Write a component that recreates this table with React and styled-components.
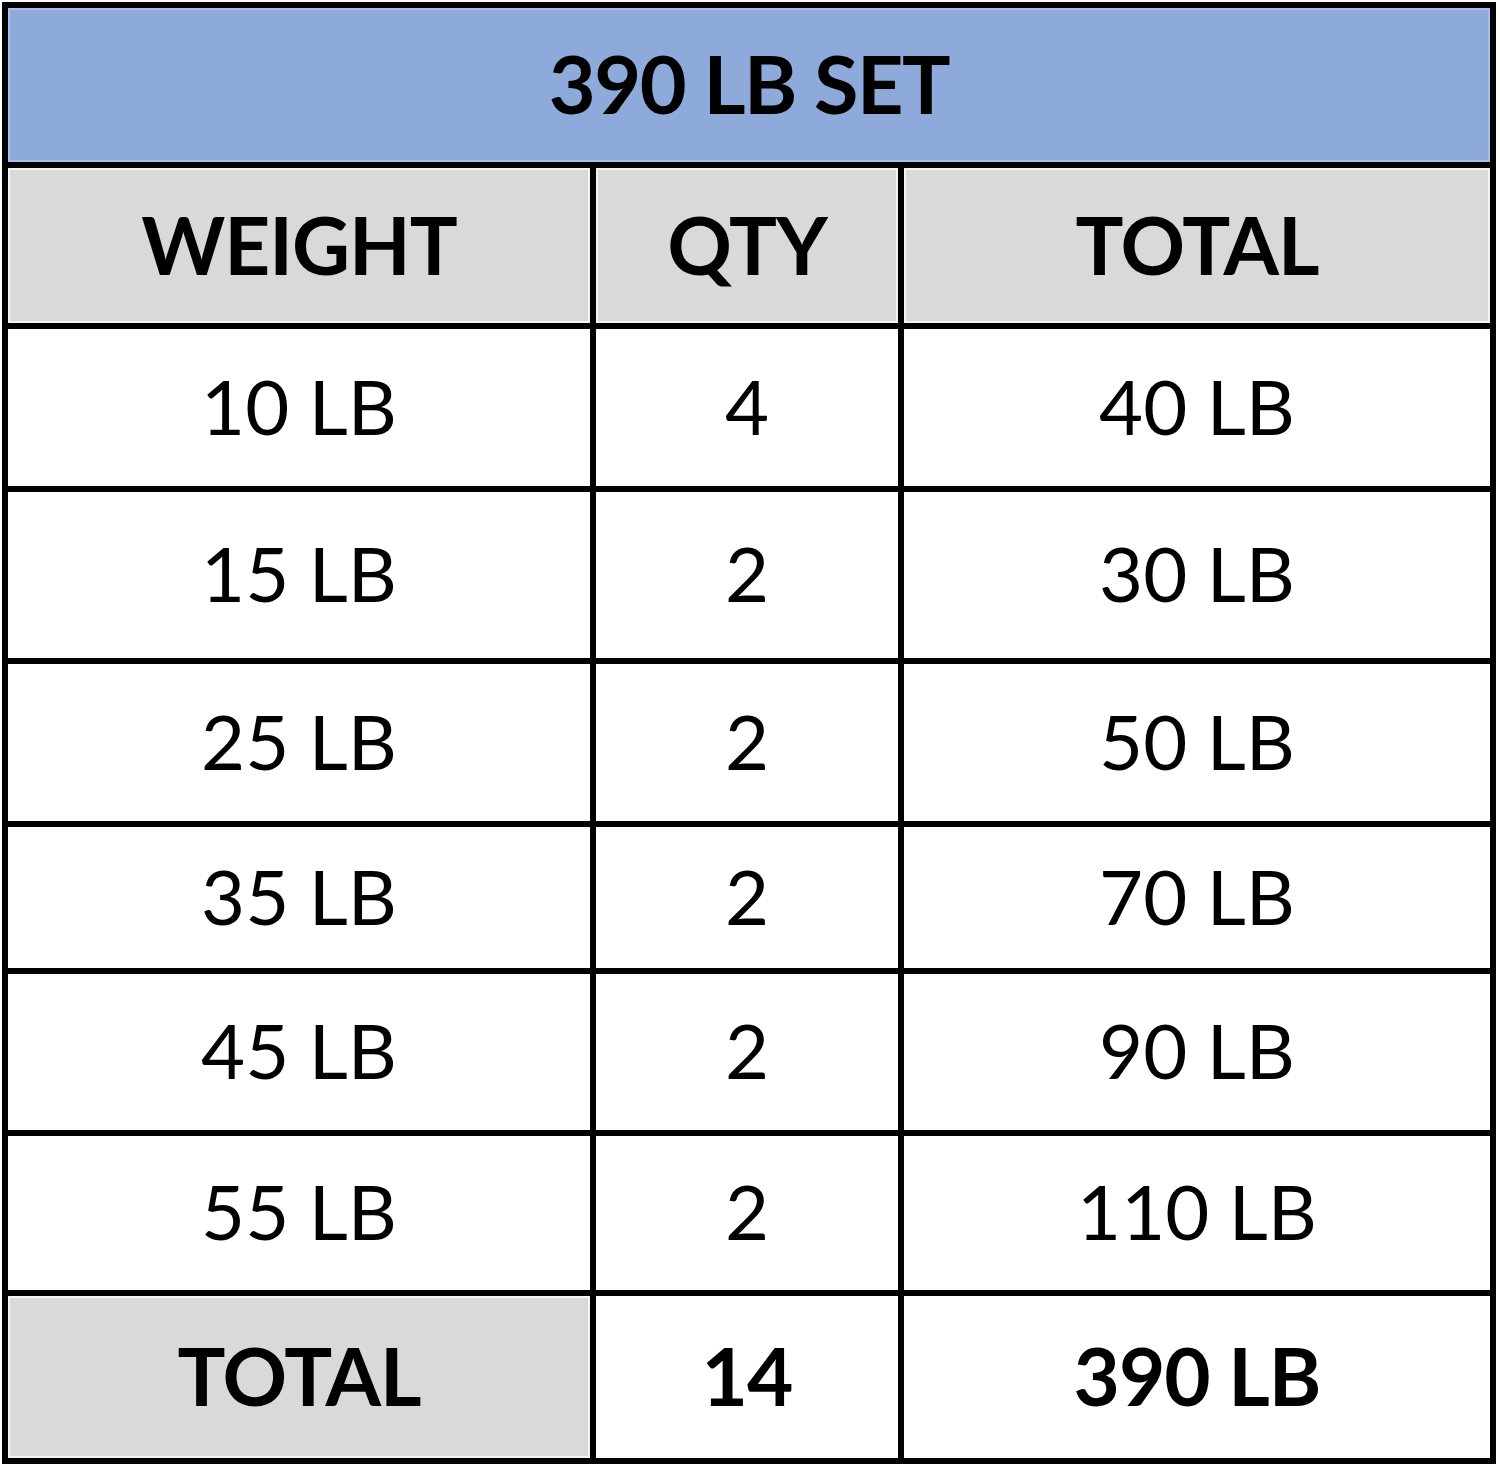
import React from "react";
import styled, { createGlobalStyle } from "styled-components";

const GlobalStyle = createGlobalStyle`
  body {
    margin: 0;
    padding: 2px;
    background: #ffffff;
    font-family: Lato, "Open Sans", sans-serif;
  }
`;

const rows = [
  { weight: "10 LB", qty: "4", total: "40 LB", h: 157 },
  { weight: "15 LB", qty: "2", total: "30 LB", h: 166 },
  { weight: "25 LB", qty: "2", total: "50 LB", h: 157 },
  { weight: "35 LB", qty: "2", total: "70 LB", h: 141 },
  { weight: "45 LB", qty: "2", total: "90 LB", h: 156 },
  { weight: "55 LB", qty: "2", total: "110 LB", h: 154 },
];

export default function App() {
  const heights = [154, 155, ...rows.map((r) => r.h), 162];
  return (
    <>
      <GlobalStyle />
      <Sheet $rows={heights.map((h) => `${h}px`).join(" ")}>
        <Title>390 LB SET</Title>

        <Cell $head>WEIGHT</Cell>
        <Cell $head>QTY</Cell>
        <Cell $head>TOTAL</Cell>

        {rows.map((r) => (
          <React.Fragment key={r.weight}>
            <Cell>{r.weight}</Cell>
            <Cell>{r.qty}</Cell>
            <Cell>{r.total}</Cell>
          </React.Fragment>
        ))}

        <Cell $head>TOTAL</Cell>
        <Cell $bold>14</Cell>
        <Cell $bold>390 LB</Cell>
      </Sheet>
    </>
  );
}

const Sheet = styled.div`
  display: grid;
  width: 1494px;
  box-sizing: border-box;
  grid-template-columns: 582px 302px 586px;
  grid-template-rows: ${(p) => p.$rows};
  gap: 6px;
  padding: 6px;
  background: #000000;
`;

const Title = styled.div`
  grid-column: 1 / -1;
  display: flex;
  align-items: center;
  justify-content: center;
  background: #8eaadb;
  box-shadow: inset 0 0 0 2px #a9bfe6;
  color: #000000;
  font-size: 81px;
  font-weight: 700;
  letter-spacing: -1.5px;
  padding-bottom: 6px;
  box-sizing: border-box;
`;

const Cell = styled.div`
  display: flex;
  align-items: center;
  justify-content: center;
  background: ${(p) => (p.$head ? "#d9d9d9" : "#ffffff")};
  box-shadow: ${(p) => (p.$head ? "inset 0 0 0 2px #f4f4f4" : "none")};
  color: #000000;
  font-size: ${(p) => (p.$head || p.$bold ? "80px" : "76px")};
  font-weight: ${(p) => (p.$head || p.$bold ? 700 : 400)};
  letter-spacing: ${(p) => (p.$head || p.$bold ? "-1px" : "0")};
  line-height: 1;
  padding-bottom: 4px;
  box-sizing: border-box;
`;
